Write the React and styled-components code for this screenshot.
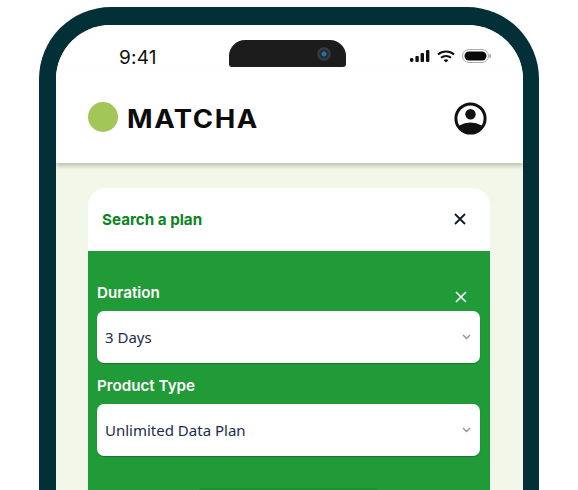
import React from 'react'
import styled, { createGlobalStyle } from 'styled-components'

const GlobalStyle = createGlobalStyle`
    html, body {
        margin: 0;
        padding: 0;
        background: #fff;
    }
    * {
        box-sizing: border-box;
    }
`
const Page = styled.div`
    width: 578px;
    height: 490px;
    overflow: hidden;
    padding: 7px 39px 0 39px;
    font-family: Inter, "Liberation Sans", sans-serif;
`
const Phone = styled.div`
    width: 500px;
    height: 560px;
    background: #f3f7e9;
    border: solid #033036;
    border-width: 18px 16px 0 17px;
    border-radius: 72px 72px 0 0;
    overflow: hidden;
`
const StatusBar = styled.div`
    height: 42px;
    padding: 15px 32px 0 63px;
    background: #fff;
    display: flex;
    align-items: flex-start;
    justify-content: space-between;
`
const Time = styled.span`
    width: 38px;
    font-size: 19px;
    font-weight: 400;
    line-height: 35px;
    color: #111;
    letter-spacing: 0.2px;
`
const Notch = styled.div`
    width: 117px;
    height: 27px;
    margin-left: 7px;
    background: #1c1c1c;
    border-radius: 16px 16px 3px 3px;
    display: flex;
    align-items: center;
    justify-content: flex-end;
    padding: 0 15px 0 0;
`
const Camera = styled.div`
    width: 14px;
    height: 14px;
    border-radius: 50%;
    background: radial-gradient(circle, #2d6f9e 0 2px, #17293a 3px, #3a3f45 6px, #2a2a2a 7px);
`
const StatusIcons = styled.div`
    display: flex;
    align-items: center;
    gap: 7px;
    height: 32px;
`
const Header = styled.div`
    height: 96px;
    background: #fff;
    padding: 35px 36px 0 32px;
    display: flex;
    align-items: flex-start;
    justify-content: space-between;
    box-shadow: 0 3px 4px rgba(140, 145, 120, 0.5);
    position: relative;
`
const Logo = styled.div`
    display: flex;
    align-items: center;
    gap: 9px;
    height: 30px;
`
const LogoDot = styled.div`
    width: 30px;
    height: 30px;
    border-radius: 50%;
    background: #a3c658;
`
const LogoText = styled.span`
    font-weight: 700;
    font-size: 25px;
    letter-spacing: 1.4px;
    padding-top: 4px;
    color: #0c0c0c;
    transform: scaleX(1.1);
    transform-origin: left center;
`
const Content = styled.div`
    padding: 25px 33px 0 32px;
`
const Card = styled.div`
    border-radius: 18px 18px 0 0;
    overflow: hidden;
`
const CardHead = styled.div`
    height: 63px;
    background: #fff;
    padding: 0 24px 1px 14px;
    display: flex;
    align-items: center;
    justify-content: space-between;
`
const CardTitle = styled.span`
    font-size: 15.2px;
    font-weight: 700;
    color: #0b8420;
`
const Form = styled.div`
    background: #219b38;
    padding: 32px 10px 60px 9px;
    display: flex;
    flex-direction: column;
`
const LabelRow = styled.div`
    height: 28px;
    display: flex;
    align-items: flex-start;
    justify-content: space-between;
    padding-right: 13px;
    margin-top: ${p => p.$top || 0}px;
`
const Label = styled.span`
    font-size: 15.2px;
    font-weight: 600;
    line-height: 20px;
    color: #fff;
`
const CloseMark = styled.svg`
    width: 12px;
    height: 12px;
    margin-top: ${p => p.$top || 0}px;
    stroke: ${p => p.$color};
    stroke-width: ${p => p.$weight || 1.8};
    fill: none;
`
const Select = styled.div`
    height: 52px;
    background: #fff;
    border-radius: 7px;
    padding: 0 9px 0 8px;
    display: flex;
    align-items: center;
    justify-content: space-between;
    box-shadow: 0 1px 1px rgba(0, 0, 0, 0.25);
`
const SelectValue = styled.span`
    font-family: "Noto Sans", "Open Sans", sans-serif;
    font-size: 15px;
    line-height: 20px;
    color: #1d2a4d;
`
const SubmitButton = styled.button`
    align-self: center;
    width: 183px;
    height: 40px;
    margin-top: 32px;
    border: none;
    border-radius: 6px;
    background: #1a9131;
`

const Close = ({ color, top, weight }) => (
    <CloseMark $color={color} $top={top} $weight={weight} viewBox="0 0 12 12">
        <path d="M1 1 L11 11 M11 1 L1 11" />
    </CloseMark>
)

const Chevron = () => (
    <svg width="9" height="6" viewBox="0 0 9 6" fill="none" stroke="#8a8f9c" strokeWidth="1.3">
        <path d="M1 1 L4.5 4.5 L8 1" />
    </svg>
)

const Signal = () => (
    <svg width="20" height="12" viewBox="0 0 20 12" fill="#111">
        <rect x="0" y="8" width="3.4" height="4" rx="1.4" />
        <rect x="5.4" y="6" width="3.4" height="6" rx="1" />
        <rect x="10.6" y="3" width="3.4" height="9" rx="1" />
        <rect x="16" y="0" width="3.4" height="12" rx="1" />
    </svg>
)

const Wifi = () => (
    <svg width="18" height="13" viewBox="0 0 18 13" fill="none" stroke="#111" strokeWidth="2">
        <path d="M1 4.6 C5.4 0.6 12.6 0.6 17 4.6" />
        <path d="M4 7.8 C6.8 5.3 11.2 5.3 14 7.8" />
        <path d="M9 12.6 L6.6 10.2 C8 9 10 9 11.4 10.2 Z" fill="#111" stroke="none" />
    </svg>
)

const Battery = () => (
    <svg width="29" height="14" viewBox="0 0 29 14">
        <rect x="0.5" y="0.5" width="26" height="13" rx="6.5" fill="#fff" stroke="#aaa" />
        <rect x="2.5" y="2.5" width="22" height="9" rx="4.5" fill="#0a0a0a" />
        <rect x="27.4" y="5" width="1.4" height="4" rx="0.7" fill="#999" />
    </svg>
)

const Avatar = () => (
    <svg width="33" height="33" viewBox="0 0 33 33">
        <defs>
            <clipPath id="avatar-clip">
                <circle cx="16.5" cy="16.5" r="14" />
            </clipPath>
        </defs>
        <circle cx="16.5" cy="16.5" r="14.6" fill="#fff" stroke="#111" strokeWidth="3" />
        <circle cx="16.5" cy="12.3" r="5.2" fill="#111" />
        <ellipse cx="16.5" cy="30" rx="15" ry="9.5" fill="#111" clipPath="url(#avatar-clip)" />
    </svg>
)

const App = () => {
    return (
        <Page>
            <GlobalStyle />
            <Phone>
                <StatusBar>
                    <Time>9:41</Time>
                    <Notch><Camera /></Notch>
                    <StatusIcons>
                        <Signal />
                        <Wifi />
                        <Battery />
                    </StatusIcons>
                </StatusBar>
                <Header>
                    <Logo>
                        <LogoDot />
                        <LogoText>MATCHA</LogoText>
                    </Logo>
                    <Avatar />
                </Header>
                <Content>
                    <Card>
                        <CardHead>
                            <CardTitle>Search a plan</CardTitle>
                            <Close color="#111827" />
                        </CardHead>
                        <Form>
                            <LabelRow>
                                <Label>Duration</Label>
                                <Close color="#fff" top={8} weight={1.6} />
                            </LabelRow>
                            <Select>
                                <SelectValue>3 Days</SelectValue>
                                <Chevron />
                            </Select>
                            <LabelRow $top={13}>
                                <Label>Product Type</Label>
                            </LabelRow>
                            <Select>
                                <SelectValue>Unlimited Data Plan</SelectValue>
                                <Chevron />
                            </Select>
                            <SubmitButton aria-label="Search" />
                        </Form>
                    </Card>
                </Content>
            </Phone>
        </Page>
    )
}

export default App
